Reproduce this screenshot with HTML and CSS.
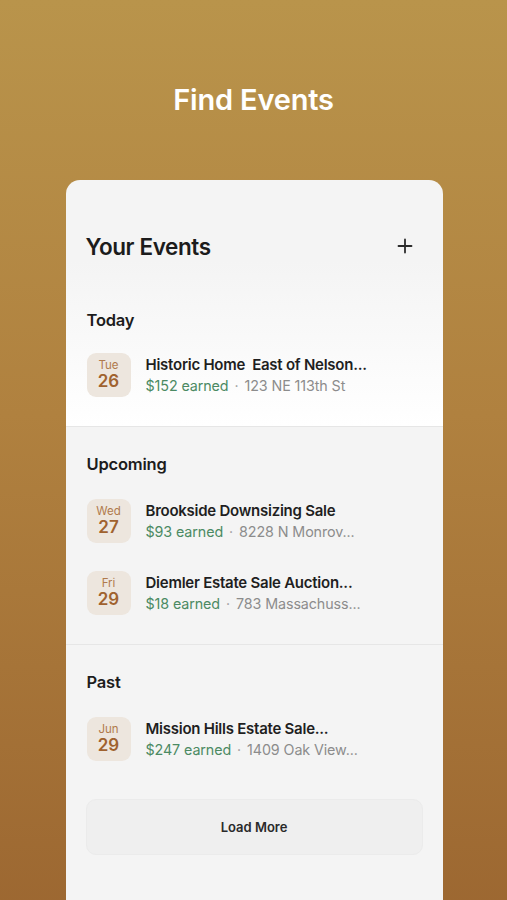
FILE: index.html
```html
<!DOCTYPE html>
<html lang="en">
<head>
    <meta charset="UTF-8">
    <meta name="viewport" content="width=device-width, initial-scale=1.0">
    <link rel="stylesheet" href="styles.css">
    <title>Find Events</title>
</head>
<body>
    <header class="page-header">
        <h1>Find Events</h1>
    </header>

    <main class="card">
        <div class="card-top">
            <h2>Your Events</h2>
            <button class="add-btn" type="button" aria-label="Add event">
                <svg width="16" height="16" viewBox="0 0 16 16">
                    <path d="M8 1.5v13M1.5 8h13" stroke="#2b2b2b" stroke-width="1.8" stroke-linecap="round"/>
                </svg>
            </button>
        </div>

        <!-- Today -->
        <section class="group group-today">
            <h3>Today</h3>
            <div class="event">
                <div class="date-box"><span class="dow">Tue</span><span class="day">26</span></div>
                <div class="event-info">
                    <div class="event-title">Historic Home&nbsp; East of Nelson...</div>
                    <div class="event-meta"><span class="earned">$152 earned</span><span class="dot">·</span><span class="addr">123 NE 113th St</span></div>
                </div>
            </div>
        </section>

        <!-- Upcoming -->
        <section class="group">
            <h3>Upcoming</h3>
            <div class="event">
                <div class="date-box"><span class="dow">Wed</span><span class="day">27</span></div>
                <div class="event-info">
                    <div class="event-title">Brookside Downsizing Sale</div>
                    <div class="event-meta"><span class="earned">$93 earned</span><span class="dot">·</span><span class="addr">8228 N Monrov...</span></div>
                </div>
            </div>
            <div class="event">
                <div class="date-box"><span class="dow">Fri</span><span class="day">29</span></div>
                <div class="event-info">
                    <div class="event-title">Diemler Estate Sale Auction...</div>
                    <div class="event-meta"><span class="earned">$18 earned</span><span class="dot">·</span><span class="addr">783 Massachuss...</span></div>
                </div>
            </div>
        </section>

        <!-- Past -->
        <section class="group group-past">
            <h3>Past</h3>
            <div class="event">
                <div class="date-box"><span class="dow">Jun</span><span class="day">29</span></div>
                <div class="event-info">
                    <div class="event-title">Mission Hills Estate Sale...</div>
                    <div class="event-meta"><span class="earned">$247 earned</span><span class="dot">·</span><span class="addr">1409 Oak View...</span></div>
                </div>
            </div>
            <button class="load-more" type="button">Load More</button>
        </section>
    </main>
</body>
</html>
```

FILE: styles.css
```css
body {
    font-family: Inter, 'Noto Sans', sans-serif;
    margin: 0;
    padding: 0;
    min-height: 900px;
    background: linear-gradient(180deg, #b9944b 0%, #b0813f 45%, #9c6731 100%);
    display: flex;
    flex-direction: column;
    align-items: center;
    overflow: hidden;
}

.page-header {
    height: 180px;
    display: flex;
    justify-content: center;
}

.page-header h1 {
    margin: 81px 0 0;
    color: #fff;
    font-size: 29px;
    font-weight: 600;
    letter-spacing: -0.2px;
    line-height: 38px;
}

.card {
    width: 377px;
    margin-left: 1px;
    min-height: 740px;
    background-color: #f4f4f4;
    border-radius: 14px 14px 0 0;
    overflow: hidden;
}

.card-top {
    display: flex;
    align-items: center;
    justify-content: space-between;
    padding: 51px 30px 0 20px;
    height: 30px;
}

.card-top h2 {
    margin: 0;
    font-size: 22.5px;
    font-weight: 600;
    letter-spacing: -0.4px;
    color: #1c1c1c;
}

.add-btn {
    border: 0;
    background: none;
    padding: 0;
    width: 16px;
    height: 16px;
    display: flex;
}

.group {
    display: flex;
    flex-direction: column;
    gap: 28px;
    padding: 26px 20px 29px 21px;
    border-bottom: 1px solid #e6e6e6;
}

.group-today {
    padding-top: 48px;
    background: linear-gradient(180deg, #f4f4f4 0%, #fafafa 55%, #ffffff 100%);
}

.group-past {
    border-bottom: 0;
}

.group h3 {
    margin: 0 0 -4px;
    font-size: 16.5px;
    font-weight: 600;
    letter-spacing: -0.2px;
    color: #1c1c1c;
    line-height: 22px;
}

.group-today h3 {
    margin-bottom: -6px;
}

.event {
    display: flex;
    align-items: center;
    gap: 15px;
}

.date-box {
    width: 44px;
    height: 44px;
    border-radius: 9px;
    background-color: #ede6de;
    display: flex;
    flex-direction: column;
    align-items: center;
    justify-content: center;
    flex-shrink: 0;
}

.dow {
    font-size: 11.5px;
    color: #b07a4c;
    line-height: 13px;
}

.day {
    font-size: 17px;
    font-weight: 600;
    color: #a0622f;
    line-height: 19px;
}

.event-info {
    display: flex;
    flex-direction: column;
    gap: 3px;
}

.event-title {
    font-size: 15px;
    font-weight: 600;
    letter-spacing: -0.25px;
    color: #1f1f1f;
    line-height: 19px;
}

.event-meta {
    font-size: 14.3px;
    line-height: 18px;
    letter-spacing: -0.1px;
}

.earned {
    color: #4b8a63;
}

.dot {
    color: #9a9a9a;
    margin: 0 6px;
}

.addr {
    color: #8c8c8c;
}

.load-more {
    display: block;
    width: 337px;
    height: 56px;
    margin: 10px 0 0 -1px;
    border: 1px solid #ebebeb;
    border-radius: 10px;
    background-color: #efefef;
    font-family: inherit;
    font-size: 13px;
    font-weight: 600;
    color: #2a2a2a;
}
```
